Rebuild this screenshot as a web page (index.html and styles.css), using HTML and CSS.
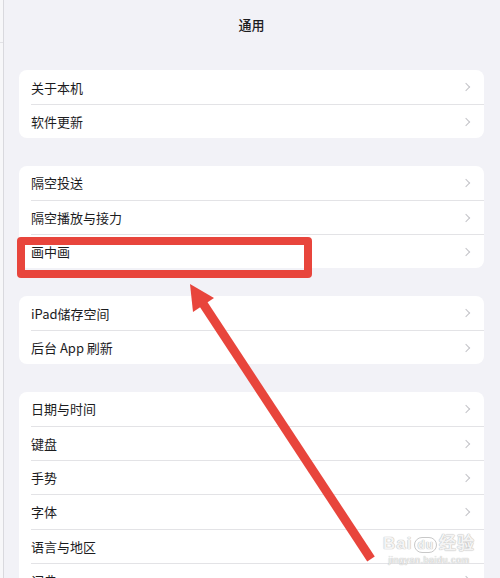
FILE: index.html
```html
<!DOCTYPE html>
<html lang="zh-CN">
<head>
    <meta charset="UTF-8">
    <meta name="viewport" content="width=device-width, initial-scale=1.0">
    <title>通用</title>
    <link rel="stylesheet" href="styles.css">
</head>
<body>
    <div class="sidebar"><div class="sidebar-top"></div></div>

    <main class="main">
        <header class="nav">通用</header>

        <section class="group">
            <div class="row">关于本机<span class="chev"></span></div>
            <div class="row">软件更新<span class="chev"></span></div>
        </section>

        <section class="group">
            <div class="row">隔空投送<span class="chev"></span></div>
            <div class="row">隔空播放与接力<span class="chev"></span></div>
            <div class="row">画中画<span class="chev"></span></div>
        </section>

        <section class="group">
            <div class="row">iPad储存空间<span class="chev"></span></div>
            <div class="row">后台 App 刷新<span class="chev"></span></div>
        </section>

        <section class="group">
            <div class="row">日期与时间<span class="chev"></span></div>
            <div class="row">键盘<span class="chev"></span></div>
            <div class="row">手势<span class="chev"></span></div>
            <div class="row">字体<span class="chev"></span></div>
            <div class="row">语言与地区<span class="chev"></span></div>
            <div class="row">词典<span class="chev"></span></div>
        </section>
    </main>

    <!-- annotation overlay -->
    <div class="highlight"></div>
    <svg class="arrow" width="500" height="578" viewBox="0 0 500 578">
        <line x1="371" y1="559" x2="202" y2="302" stroke="#e8453c" stroke-width="9"/>
        <polygon points="190,284 214,298 193,312" fill="#e8453c"/>
    </svg>

    <div class="watermark">
        <div class="wm-logo">Bai<span class="wm-du">du</span>经验</div>
        <div class="wm-url">jingyan.baidu.com</div>
    </div>
</body>
</html>
```

FILE: styles.css
```css
html, body {
    margin: 0;
    padding: 0;
}
body {
    width: 500px;
    height: 578px;
    overflow: hidden;
    display: flex;
    background-color: #f2f2f7;
    font-family: "Noto Sans CJK SC", "Noto Sans", sans-serif;
    color: #1c1c1e;
    position: relative;
}
.sidebar {
    width: 3px;
    flex: none;
    background-color: #f7f7f9;
    border-right: 1px solid #d9d9de;
}
.sidebar-top {
    height: 42px;
    border-bottom: 1px solid #e2e2e6;
}
.main {
    flex: 1;
    padding: 0 16px 0 15px;
}
.nav {
    height: 50px;
    line-height: 50px;
    text-align: center;
    font-size: 13px;
    font-weight: 500;
}
.group {
    background-color: #fff;
    border-radius: 8px;
    padding-left: 12px;
    margin: 27.5px 0;
}
.nav + .group {
    margin-top: 20px;
}
.row {
    height: 34.2px;
    box-sizing: border-box;
    display: flex;
    align-items: center;
    justify-content: space-between;
    font-size: 13px;
    padding-right: 13px;
}
.row + .row {
    border-top: 1px solid #e3e3e6;
}
.chev {
    width: 5px;
    height: 5px;
    border-top: 1.5px solid #c4c4c8;
    border-right: 1.5px solid #c4c4c8;
    transform: rotate(45deg);
    margin-right: 2px;
}
.highlight {
    position: absolute;
    left: 17px;
    top: 237px;
    width: 279px;
    height: 25px;
    border: 8px solid #e8453c;
    border-radius: 4px;
}
.arrow {
    position: absolute;
    left: 0;
    top: 0;
}
.watermark {
    position: absolute;
    left: 383px;
    top: 534px;
    color: #f4f4f4;
    text-shadow: 0 0 1px #b9b9b9, 0 0 1px #b9b9b9;
    font-family: "Liberation Sans", sans-serif;
    text-align: center;
}
.wm-logo {
    font-size: 17px;
    font-weight: bold;
    letter-spacing: 1px;
    line-height: 20px;
}
.wm-du {
    font-size: 12px;
    border: 1px solid #c8c8c8;
    border-radius: 8px;
    padding: 0 2px;
    margin: 0 2px;
}
.wm-url {
    font-size: 9px;
    line-height: 11px;
    letter-spacing: 0.5px;
}
```
